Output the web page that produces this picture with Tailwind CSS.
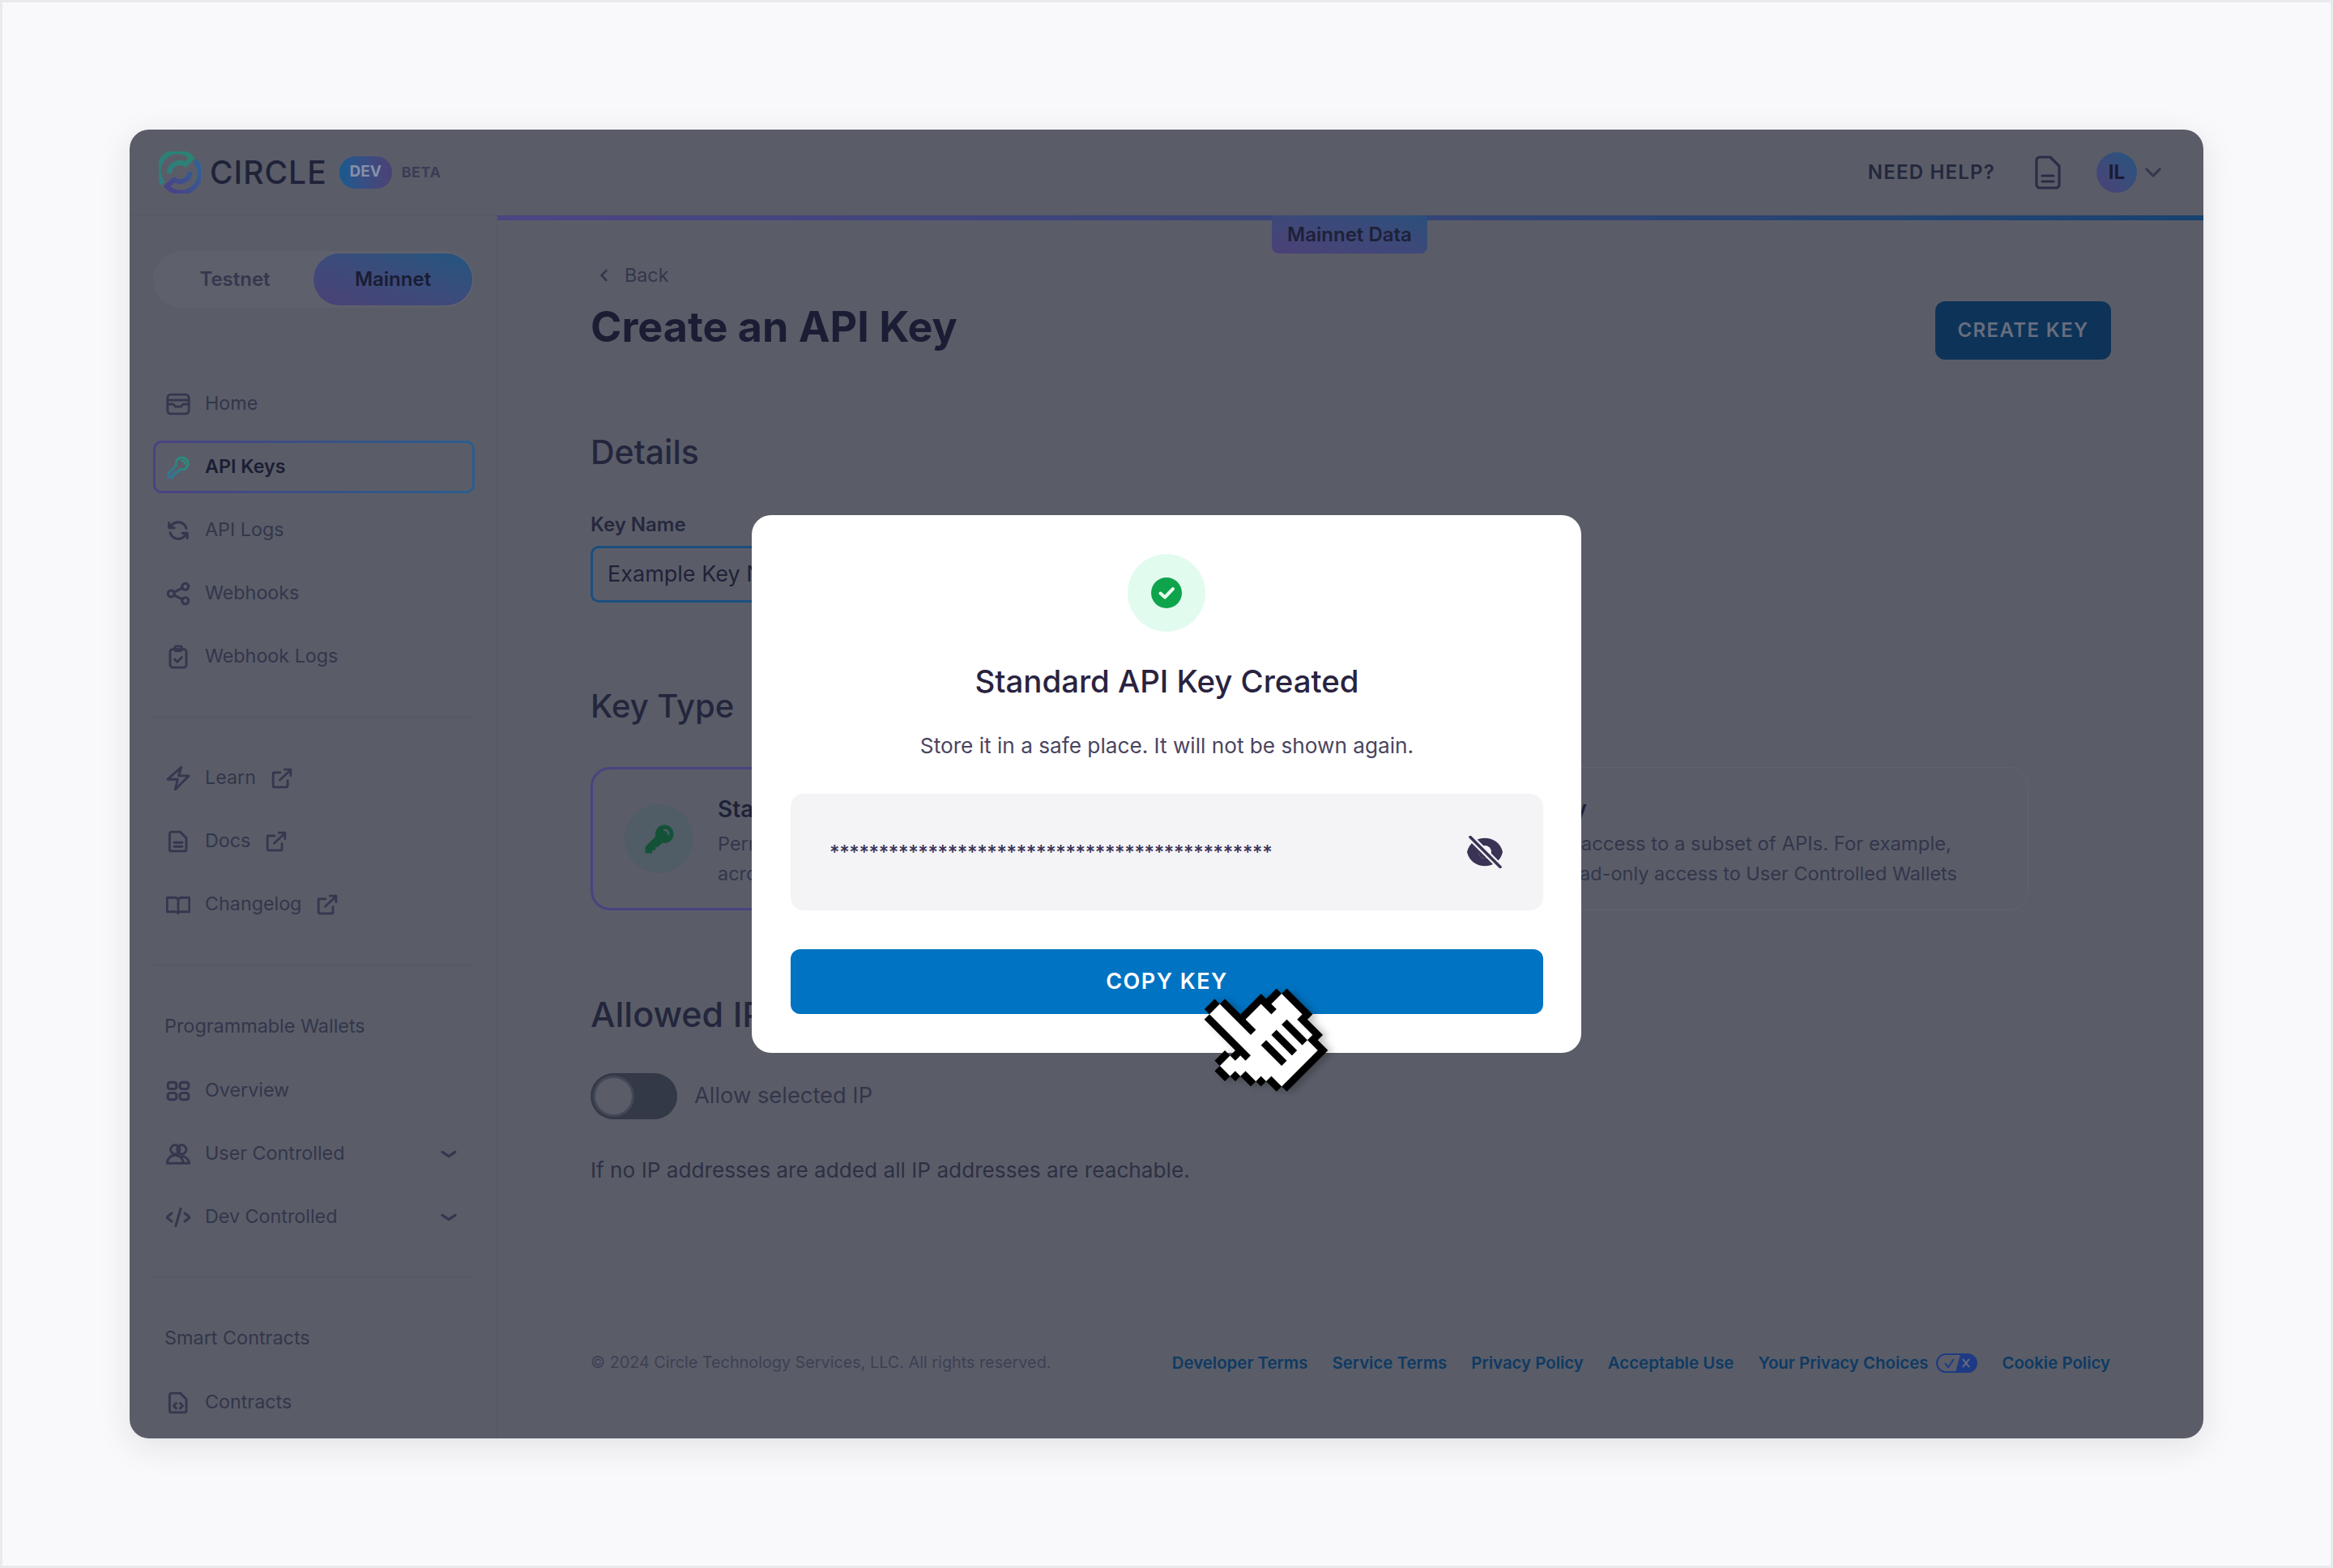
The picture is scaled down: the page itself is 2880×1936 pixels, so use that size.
<!DOCTYPE html>
<html lang="en">
<head>
<meta charset="utf-8">
<title>Create an API Key</title>
<script src="https://cdn.jsdelivr.net/npm/@tailwindcss/browser@4"></script>
</head>
<body>
<svg width="0" height="0" class="absolute">
  <defs>
    <linearGradient id="lgGreen" x1="0" y1="1" x2="1" y2="0"><stop offset="0" stop-color="#2f7599"/><stop offset="1" stop-color="#2a9078"/></linearGradient>
    <linearGradient id="lgLogo" x1="0" y1="1" x2="1" y2="0"><stop offset="0" stop-color="#2f7c80"/><stop offset="1" stop-color="#2a8474"/></linearGradient>
    <linearGradient id="lgPurple" x1="1" y1="0" x2="0" y2="1"><stop offset="0" stop-color="#2c649a"/><stop offset="1" stop-color="#4b3f85"/></linearGradient>
  </defs>
</svg>
<div class="relative box-border h-[1936px] w-[2880px] overflow-hidden border-[3px] border-[#e9eaee] bg-[#f9f9fb] pl-[157px] pt-[157px] [font-family:Inter,sans-serif]">
  <div class="flex h-[1616px] w-[2560px] flex-col overflow-hidden rounded-[24px] bg-[#5a5d68] shadow-[0_10px_40px_rgba(30,32,50,0.10)]">
    <!-- header -->
    <header class="flex h-[106px] shrink-0 items-center border-b border-[#555864] pl-[36px] pr-[48px]">
      <svg class="h-[52px] w-[52px]" viewBox="0 0 52 52" fill="none" stroke-width="6">
        <path stroke="url(#lgLogo)" d="M5.7 39.7A23 23 0 1 1 40.7 8L33 16A13 13 0 0 0 13 27"/>
        <path stroke="url(#lgPurple)" d="M44.7 11.3A23 23 0 0 1 10 43L19 35A13 13 0 0 0 39 25"/>
      </svg>
      <span class="ml-[11px] text-[39px] font-medium leading-none tracking-[1px] text-[#1f2238]">CIRCLE</span>
      <span class="ml-[15px] flex h-[40px] w-[65px] items-center justify-center rounded-full bg-linear-to-r from-[#14598f] to-[#4b4176] text-[19px] font-bold text-[#8490a8]">DEV</span>
      <span class="ml-[12px] text-[18px] font-bold tracking-[0.5px] text-[#3a3c55]">BETA</span>
      <span class="ml-auto text-[24px] font-semibold tracking-[1.2px] text-[#24273d]">NEED HELP?</span>
      <svg class="ml-[41px] h-[48px] w-[48px]" viewBox="0 0 24 24" fill="none" stroke="#2a2d45" stroke-width="1.6" stroke-linecap="round" stroke-linejoin="round"><path d="M7 2.5h6.5L19 8v11.5a2 2 0 0 1-2 2H7a2 2 0 0 1-2-2v-15a2 2 0 0 1 2-2zM8.5 14h7M8.5 17.5h7"/></svg>
      <span class="ml-[36px] flex h-[50px] w-[50px] items-center justify-center rounded-full bg-linear-to-tr from-[#4b4176] to-[#21557f] text-[24px] font-bold text-[#1a1c33]">IL</span>
      <svg class="ml-[6px] h-[28px] w-[28px]" viewBox="0 0 24 24" fill="none" stroke="#34374e" stroke-width="2.6" stroke-linecap="round" stroke-linejoin="round"><path d="M5 8.5l7 7 7-7"/></svg>
    </header>
    <div class="flex min-h-0 flex-1">
      <!-- sidebar -->
      <aside class="w-[454px] shrink-0 border-r border-[#555864] pl-[29px] pr-[27px] pt-[44px]">
        <div class="relative flex h-[70px] w-[396px] items-center rounded-full bg-[#5e616c] pr-[2px]">
          <span class="w-[198px] pl-[4px] text-center text-[24px] font-semibold text-[#35384e]">Testnet</span>
          <span class="flex h-[64px] w-[196px] items-center justify-center rounded-full bg-linear-to-tr from-[#4b4176] to-[#21557f] text-[24px] font-semibold text-[#1a1c33]">Mainnet</span>
        </div>
        <nav class="mt-[86px] flex flex-col gap-[13px] text-[23.3px] text-[#33364b]">
          <a class="flex h-[65px] items-center gap-[18px] pl-[16px]">
            <svg class="h-[30px] w-[30px]" viewBox="0 0 24 24" fill="none" stroke="#34374e" stroke-width="2.300" stroke-linecap="round" stroke-linejoin="round"><rect x="1.500" y="2.500" width="21" height="19" rx="3"/><path d="M1.500 8h21M1.500 12h5.500l2.500 2.500h5l2.500-2.500h5.500"/></svg>Home</a>
          <a class="flex h-[65px] items-center gap-[18px] rounded-[10px] border-[3px] border-transparent pl-[13px] font-semibold text-[#1b1e33] [background:linear-gradient(#5a5d68,#5a5d68)_padding-box,linear-gradient(90deg,#4a4280,#2a5d8e)_border-box]">
            <svg class="h-[30px] w-[30px]" viewBox="0 0 24 24" fill="none" stroke="url(#lgGreen)" stroke-width="2.300" stroke-linecap="round" stroke-linejoin="round"><path d="M15.750 5.250a3 3 0 0 1 3 3m3 0a6 6 0 0 1-7.029 5.912c-.563-.097-1.159.026-1.563.43L10.500 17.250H8.250v2.250H6v2.250H2.250v-2.818c0-.597.237-1.170.659-1.591l6.499-6.499c.404-.404.527-1 .43-1.563A6 6 0 1 1 21.750 8.250Z"/></svg>API Keys</a>
          <a class="flex h-[65px] items-center gap-[18px] pl-[16px]">
            <svg class="h-[30px] w-[30px]" viewBox="0 0 24 24" fill="none" stroke="#34374e" stroke-width="2.500" stroke-linecap="round" stroke-linejoin="round"><g transform="translate(24 0) scale(-1 1)"><path d="M16.023 9.348h4.992M2.985 19.644v-4.992m0 0h4.992m-4.993 0 3.181 3.183a8.250 8.250 0 0 0 13.803-3.700M4.031 9.865a8.250 8.250 0 0 1 13.803-3.700l3.181 3.182m0-4.991v4.990"/></g></svg>API Logs</a>
          <a class="flex h-[65px] items-center gap-[18px] pl-[16px]">
            <svg class="h-[30px] w-[30px]" viewBox="0 0 24 24" fill="none" stroke="#34374e" stroke-width="2.500" stroke-linecap="round" stroke-linejoin="round"><circle cx="5" cy="12" r="3.200"/><circle cx="19" cy="5" r="3.200"/><circle cx="19" cy="19" r="3.200"/><path d="M8 10.500l8-4M8 13.500l8 4"/></svg>Webhooks</a>
          <a class="flex h-[65px] items-center gap-[18px] pl-[16px]">
            <svg class="h-[30px] w-[30px]" viewBox="0 0 24 24" fill="none" stroke="#34374e" stroke-width="2.300" stroke-linecap="round" stroke-linejoin="round"><rect x="4" y="4.500" width="16" height="18" rx="2.500"/><rect x="8.500" y="1.500" width="7" height="4.500" rx="1.500"/><path d="M8.500 14.500l2.500 2.500 4.500-4.500"/></svg>Webhook Logs</a>
        </nav>
        <div class="mb-[42px] mt-[42px] h-px bg-[#545762]"></div>
        <nav class="flex flex-col gap-[13px] text-[23.3px] text-[#33364b]">
          <a class="flex h-[65px] items-center pl-[16px]">
            <svg class="mr-[18px] h-[30px] w-[30px]" viewBox="0 0 24 24" fill="none" stroke="#34374e" stroke-width="2.300" stroke-linecap="round" stroke-linejoin="round"><path d="M1.500 13L15 1l-2.500 8.500H22.500L9 23l2.500-10z"/></svg>Learn
            <svg class="ml-[19px] h-[26px] w-[26px]" viewBox="0 0 24 24" fill="none" stroke="#34374e" stroke-width="2.600" stroke-linecap="round" stroke-linejoin="round"><path d="M10 5.500H3a1 1 0 0 0-1 1V21a1 1 0 0 0 1 1h14.500a1 1 0 0 0 1-1v-6.500M9.500 14L22 2.500M15 2h7v7"/></svg></a>
          <a class="flex h-[65px] items-center pl-[16px]">
            <svg class="mr-[18px] h-[30px] w-[30px]" viewBox="0 0 24 24" fill="none" stroke="#34374e" stroke-width="2.300" stroke-linecap="round" stroke-linejoin="round"><path d="M5.500 2.500h8.500l6 6v11a2 2 0 0 1-2 2H5.500a2 2 0 0 1-2-2v-15a2 2 0 0 1 2-2zM8 13h8M8 17h8"/></svg>Docs
            <svg class="ml-[19px] h-[26px] w-[26px]" viewBox="0 0 24 24" fill="none" stroke="#34374e" stroke-width="2.600" stroke-linecap="round" stroke-linejoin="round"><path d="M10 5.500H3a1 1 0 0 0-1 1V21a1 1 0 0 0 1 1h14.500a1 1 0 0 0 1-1v-6.500M9.500 14L22 2.500M15 2h7v7"/></svg></a>
          <a class="flex h-[65px] items-center pl-[16px]">
            <svg class="mr-[18px] h-[30px] w-[30px]" viewBox="0 0 24 24" fill="none" stroke="#34374e" stroke-width="2.300" stroke-linecap="round" stroke-linejoin="round"><path d="M1 5h7.500a3.500 3.500 0 0 1 3.500 2 3.500 3.500 0 0 1 3.500-2H23v14h-7.500a3.500 3.500 0 0 0-3.500 1.500A3.500 3.500 0 0 0 8.500 19H1zM12 7v13"/></svg>Changelog
            <svg class="ml-[19px] h-[26px] w-[26px]" viewBox="0 0 24 24" fill="none" stroke="#34374e" stroke-width="2.600" stroke-linecap="round" stroke-linejoin="round"><path d="M10 5.500H3a1 1 0 0 0-1 1V21a1 1 0 0 0 1 1h14.500a1 1 0 0 0 1-1v-6.500M9.500 14L22 2.500M15 2h7v7"/></svg></a>
        </nav>
        <div class="mt-[42px] h-px bg-[#545762]"></div>
        <p class="mt-[60px] h-[30px] pl-[14px] text-[23.4px] leading-[30px] text-[#33364b]">Programmable Wallets</p>
        <nav class="mt-[32px] flex flex-col gap-[13px] text-[23.3px] text-[#33364b]">
          <a class="flex h-[65px] items-center gap-[18px] pl-[16px]">
            <svg class="h-[30px] w-[30px]" viewBox="0 0 24 24" fill="none" stroke="#34374e" stroke-width="2.500"><rect x="1.800" y="3.500" width="8.500" height="6.500" rx="2.200"/><rect x="13.700" y="3.500" width="8.500" height="6.500" rx="2.200"/><rect x="1.800" y="14" width="8.500" height="6.500" rx="2.200"/><rect x="13.700" y="14" width="8.500" height="6.500" rx="2.200"/></svg>Overview</a>
          <a class="flex h-[65px] items-center gap-[18px] pl-[16px]">
            <svg class="h-[30px] w-[30px]" viewBox="0 0 24 24" fill="none" stroke="#34374e" stroke-width="2.300" stroke-linejoin="round"><circle cx="9" cy="7.500" r="4.500"/><circle cx="15.500" cy="7.500" r="4.500"/><path d="M1 21a8 8 0 0 1 16 0zM15 14a8 8 0 0 1 8 7h-6"/></svg>User Controlled
            <svg class="ml-auto mr-[16px] h-[32px] w-[32px]" viewBox="0 0 24 24" fill="none" stroke="#34374e" stroke-width="2.400" stroke-linecap="round" stroke-linejoin="round"><path d="M6 10l6 4 6-4"/></svg></a>
          <a class="flex h-[65px] items-center gap-[18px] pl-[16px]">
            <svg class="h-[30px] w-[30px]" viewBox="0 0 24 24" fill="none" stroke="#34374e" stroke-width="2.500" stroke-linecap="round" stroke-linejoin="round"><path d="M5.500 8L0.500 12l5 4M18.500 8l5 4-5 4M14.500 3.500l-5 17"/></svg>Dev Controlled
            <svg class="ml-auto mr-[16px] h-[32px] w-[32px]" viewBox="0 0 24 24" fill="none" stroke="#34374e" stroke-width="2.400" stroke-linecap="round" stroke-linejoin="round"><path d="M6 10l6 4 6-4"/></svg></a>
        </nav>
        <div class="mt-[41px] h-px bg-[#545762]"></div>
        <p class="mt-[60px] h-[30px] pl-[14px] text-[23.4px] leading-[30px] text-[#33364b]">Smart Contracts</p>
        <a class="mt-[32px] flex h-[65px] items-center gap-[18px] pl-[16px] text-[23.3px] text-[#33364b]">
          <svg class="h-[30px] w-[30px]" viewBox="0 0 24 24" fill="none" stroke="#34374e" stroke-width="2.300" stroke-linecap="round" stroke-linejoin="round"><path d="M5.500 2.500h8.500l6 6v11a2 2 0 0 1-2 2H5.500a2 2 0 0 1-2-2v-15a2 2 0 0 1 2-2zM10 12.500L7.500 15l2.500 2.500M14 12.500l2.500 2.500-2.500 2.500"/></svg>Contracts</a>
      </aside>
      <!-- main -->
      <main class="relative min-w-0 flex-1">
        <div class="h-[6px] bg-linear-to-r from-[#4c4583] to-[#16426f]"></div>
        <div class="absolute left-[956px] top-0 flex h-[47px] w-[192px] items-center justify-center rounded-b-[8px] bg-linear-to-tr from-[#4b4176] to-[#2a4f7c] text-[24px] font-semibold text-[#1e2138]">Mainnet Data</div>
        <div class="pl-[115px] pr-[114px]">
          <div class="mt-[53px] flex h-[30px] items-center text-[23.3px] text-[#33364b]">
            <svg class="ml-[7px] mr-[15px] h-[20px] w-[20px]" viewBox="0 0 20 20" fill="none" stroke="#34374e" stroke-width="2.500" stroke-linecap="round" stroke-linejoin="round"><path d="M12.500 4l-6 6 6 6"/></svg>Back
          </div>
          <div class="mt-[17px] flex h-[72px] items-center justify-between">
            <h1 class="pb-[8px] text-[52px] font-bold text-[#1a1d33]">Create an API Key</h1>
            <button class="flex h-[72px] w-[217px] items-center justify-center rounded-[12px] bg-[#0e3358] text-[24px] font-semibold tracking-[1.400px] text-[#686d7d]">CREATE KEY</button>
          </div>
          <h2 class="mt-[84px] text-[41px] font-medium leading-[60px] text-[#23263c]">Details</h2>
          <label class="mt-[45px] block text-[24px] font-semibold leading-[30px] text-[#25283e]">Key Name</label>
          <div class="mt-[11px] flex h-[70px] w-[1000px] items-center rounded-[10px] border-[3px] border-[#1a4f7e] pl-[18px] text-[27px] text-[#1f2238]">Example Key Name</div>
          <h2 class="mt-[98px] text-[40px] font-medium leading-[60px] text-[#23263c]">Key Type</h2>
          <div class="mt-[45px] grid h-[177px] grid-cols-2 gap-[30px] pr-[102px]">
            <div class="flex items-center gap-[30px] rounded-[24px] border-[3px] border-[#474481] pl-[39px]">
              <span class="flex h-[85px] w-[85px] shrink-0 items-center justify-center rounded-full bg-[#505c66]">
                <svg class="h-[40px] w-[40px]" viewBox="0 0 24 24" fill="#145237"><path fill-rule="evenodd" clip-rule="evenodd" d="M15.750 1.500a6.750 6.750 0 0 0-6.651 7.906c.067.390-.032.717-.221.906l-6.500 6.499a3 3 0 0 0-.878 2.121v2.818c0 .414.336.750.750.750H6a.750.750 0 0 0 .750-.750v-1.500h1.500A.750.750 0 0 0 9 19.500V18h1.500a.750.750 0 0 0 .530-.220l2.658-2.658c.190-.189.517-.288.906-.220A6.750 6.750 0 1 0 15.750 1.500Zm0 3a.750.750 0 0 0 0 1.500A2.250 2.250 0 0 1 18 8.250a.750.750 0 0 0 1.500 0 3.750 3.750 0 0 0-3.750-3.750Z"/></svg>
              </span>
              <div>
                <p class="pt-[3px] text-[28px] font-semibold text-[#1f2238]">Standard Key</p>
                <p class="mt-[3px] text-[23.5px] leading-[37px] text-[#33364b]">Permits full access<br>across all APIs</p>
              </div>
            </div>
            <div class="flex flex-col items-end justify-center overflow-hidden whitespace-nowrap rounded-[24px] border border-[#61646f] pr-[87px]">
              <p class="mr-[457px] pt-[3px] text-[28px] font-semibold text-[#1f2238]">Restricted Key</p>
              <p class="mr-[7px] mt-[3px] text-[23.9px] leading-[37px] text-[#33364b]">Key has access to a subset of APIs. For example,</p>
              <p class="text-[23.5px] leading-[37px] text-[#33364b]">read-only access to User Controlled Wallets</p>
            </div>
          </div>
          <h2 class="mt-[98px] text-[43px] font-medium leading-[60px] text-[#23263c]">Allowed IPs</h2>
          <div class="mt-[43px] flex h-[57px] items-center gap-[21px]">
            <span class="flex h-[57px] w-[107px] items-center rounded-full bg-[#343947] pl-[3px]"><span class="h-[51px] w-[51px] rounded-full border-[3px] border-[#434857] bg-[#5a5d68]"></span></span>
            <span class="text-[27.300px] text-[#33364a]">Allow selected IP</span>
          </div>
          <p class="mt-[45px] text-[26.200px] leading-[36px] text-[#2d3044]">If no IP addresses are added all IP addresses are reachable.</p>
          <footer class="mt-[205px] flex h-[30px] items-center text-[19.800px] text-[#3d4054]">
            <span>© 2024 Circle Technology Services, LLC. All rights reserved.</span>
            <span class="ml-auto flex items-center gap-[30px] pr-[1px] text-[20.400px] font-semibold text-[#0e3a63]">
              <a>Developer Terms</a><a>Service Terms</a><a>Privacy Policy</a><a>Acceptable Use</a>
              <span class="flex items-center gap-[10px]"><a>Your Privacy Choices</a>
                <svg class="h-[24px] w-[51px]" viewBox="0 0 51 24"><rect x="1" y="1" width="49" height="22" rx="11" fill="#5a5d68" stroke="#1f3a84" stroke-width="2"/><path d="M30 1h9a11 11 0 0 1 0 22H24z" fill="#1f3a84"/><path d="M11 12l4 5 7-10" fill="none" stroke="#1f3a84" stroke-width="2"/><path d="M33 7l8 10M41 7l-8 10" stroke="#6a6d80" stroke-width="2"/></svg></span>
              <a>Cookie Policy</a>
            </span>
          </footer>
        </div>
      </main>
    </div>
  </div>
  <!-- modal -->
  <section class="absolute left-[925px] top-[633px] w-[1024px] rounded-[24px] bg-white pb-[48px] pl-[48px] pr-[47px] pt-[48px]">
    <div class="mx-auto flex h-[96px] w-[96px] -translate-x-[1px] items-center justify-center rounded-full bg-[#e2fbef]">
      <svg class="h-[40px] w-[40px]" viewBox="0 0 40 40"><circle cx="20" cy="20" r="19" fill="#0ea44c"/><path d="M12.500 20.500l5.500 5 10-10.500" fill="none" stroke="#e8fbf0" stroke-width="4" stroke-linecap="round" stroke-linejoin="round"/></svg>
    </div>
    <h3 class="mt-[36px] text-center text-[38.400px] font-medium leading-[50px] text-[#29233f]">Standard API Key Created</h3>
    <p class="mt-[37px] text-center text-[26.200px] leading-[36px] text-[#4a4560]">Store it in a safe place. It will not be shown again.</p>
    <div class="mt-[41px] flex h-[144px] items-center justify-between rounded-[16px] bg-[#f4f4f7] pl-[48px] pr-[49px]">
      <span class="pt-[2px] text-[24px] font-medium tracking-[-0.350px] text-[#3a3355]">*********************************************</span>
      <svg class="h-[40px] w-[46px]" viewBox="0 0 46 40"><path fill="#3a3355" d="M1 20C6 -3 40 -3 45 20C40 43 6 43 1 20Z"/><circle cx="23" cy="20" r="8" fill="#f4f4f7"/><path fill="#3a3355" d="M17.300 14.300A8 8 0 0 0 28.700 25.700Z"/><path d="M5 1.500L42 38.500" stroke="#f4f4f7" stroke-width="8"/><path d="M5 1.500L42 38.500" stroke="#3a3355" stroke-width="3.600" stroke-linecap="round"/></svg>
    </div>
    <button class="mt-[48px] flex h-[80px] w-full items-center justify-center rounded-[12px] bg-[#0073c3] text-[27px] font-semibold tracking-[1.500px] text-white">COPY KEY</button>
  </section>
  <!-- pointer -->
  <svg class="absolute left-[1483px] top-[1206px] h-[144px] w-[135px] -rotate-45 drop-shadow-[3px_5px_5px_rgba(0,0,0,0.25)]" viewBox="0 0 15 16">
    <path fill="#fff" d="M5 1h2v6H5zM8 5h3v2H8zM12 6h2v1h-2zM1 7h2v1H1zM5 7h9v2H5zM1 8h3v1H1zM2 9h5v1H2zM8 9h1v4H8zM10 9h1v4h-1zM12 9h2v1h-2zM3 10h4v2H3zM12 10h1v3h-1zM4 12h3v1H4zM5 13h7v2H5z"/>
    <path fill="#000" d="M5 0h2v1H5zM4 1h1v6H4zM7 1h1v6H7zM8 4h4v1H8zM11 5h3v1h-3zM11 6h1v1h-1zM14 6h1v5h-1zM1 6h2v1H1zM0 7h1v2H0zM3 7h2v1H3zM4 8h1v1H4zM1 9h1v1H1zM2 10h1v2H2zM3 12h1v1H3zM4 13h1v2H4zM5 15h8v1H5zM13 10h1v4h-1zM12 13h1v2h-1zM7 9h1v4H7zM9 9h1v4H9zM11 9h1v4h-1z"/>
  </svg>
</div>
</body>
</html>
